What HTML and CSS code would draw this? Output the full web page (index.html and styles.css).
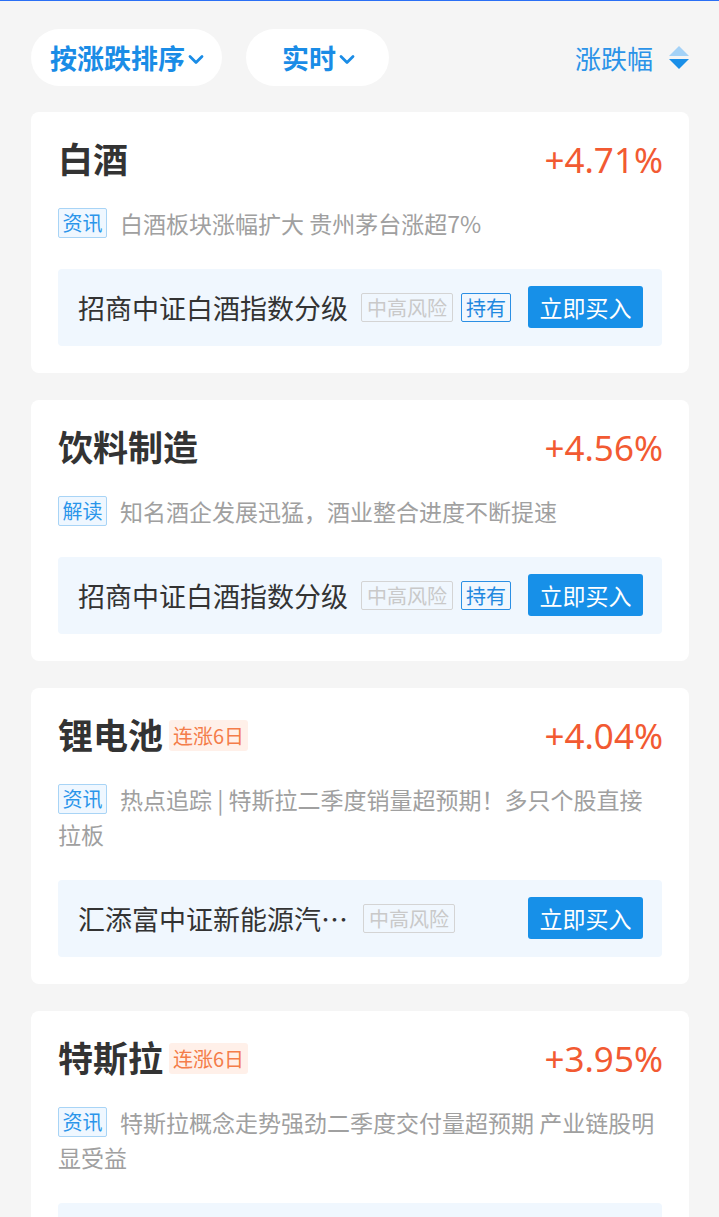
FILE: index.html
```html
<!DOCTYPE html>
<html lang="zh-CN">
<head>
<meta charset="utf-8">
<title>板块涨跌</title>
<link rel="stylesheet" href="styles.css">
</head>
<body>
<div class="page">
  <div class="toolbar">
    <button class="pill pill-sort">按涨跌排序<svg class="chev" width="16" height="11" viewBox="0 0 16 11"><path d="M2 2.5 L8 8.5 L14 2.5" fill="none" stroke="currentColor" stroke-width="2.8" stroke-linecap="round" stroke-linejoin="round"/></svg></button>
    <button class="pill pill-time">实时<svg class="chev" width="16" height="11" viewBox="0 0 16 11"><path d="M2 2.5 L8 8.5 L14 2.5" fill="none" stroke="currentColor" stroke-width="2.8" stroke-linecap="round" stroke-linejoin="round"/></svg></button>
    <div class="sort">涨跌幅<svg class="sort-icon" width="20" height="24" viewBox="0 0 20 24"><polygon points="10,0 20,10 0,10" fill="#a4d2f7"/><polygon points="0,13 20,13 10,23" fill="#1a8fe8"/></svg></div>
  </div>

  <div class="list">
    <div class="card">
      <div class="card-head">
        <div class="title-wrap"><span class="title">白酒</span></div>
        <span class="pct">+4.71%</span>
      </div>
      <p class="desc"><span class="tag">资讯</span>白酒板块涨幅扩大 贵州茅台涨超7%</p>
      <div class="fund">
        <span class="fund-name">招商中证白酒指数分级</span>
        <span class="risk">中高风险</span>
        <span class="hold">持有</span>
        <button class="buy">立即买入</button>
      </div>
    </div>

    <div class="card">
      <div class="card-head">
        <div class="title-wrap"><span class="title">饮料制造</span></div>
        <span class="pct">+4.56%</span>
      </div>
      <p class="desc"><span class="tag">解读</span>知名酒企发展迅猛，酒业整合进度不断提速</p>
      <div class="fund">
        <span class="fund-name">招商中证白酒指数分级</span>
        <span class="risk">中高风险</span>
        <span class="hold">持有</span>
        <button class="buy">立即买入</button>
      </div>
    </div>

    <div class="card">
      <div class="card-head">
        <div class="title-wrap"><span class="title">锂电池</span><span class="streak">连涨6日</span></div>
        <span class="pct">+4.04%</span>
      </div>
      <p class="desc"><span class="tag">资讯</span>热点追踪 | 特斯拉二季度销量超预期！多只个股直接拉板</p>
      <div class="fund">
        <span class="fund-name">汇添富中证新能源汽车指数</span>
        <span class="risk">中高风险</span>
        <button class="buy">立即买入</button>
      </div>
    </div>

    <div class="card">
      <div class="card-head">
        <div class="title-wrap"><span class="title">特斯拉</span><span class="streak">连涨6日</span></div>
        <span class="pct">+3.95%</span>
      </div>
      <p class="desc"><span class="tag">资讯</span>特斯拉概念走势强劲二季度交付量超预期 产业链股明显受益</p>
      <div class="fund">
        <span class="fund-name">汇添富中证新能源汽车指数</span>
        <span class="risk">中高风险</span>
        <button class="buy">立即买入</button>
      </div>
    </div>
  </div>
</div>
</body>
</html>
```

FILE: styles.css
```css
* { box-sizing: border-box; }

html, body {
  margin: 0;
  padding: 0;
}

body {
  background: #f5f5f5;
  font-family: "Noto Sans CJK SC", "Noto Sans", sans-serif;
  color: #333;
  border-top: 1px solid #2a6ff5;
  overflow: hidden;
}

.page {
  padding: 28px 30px 0 31px;
}

.toolbar {
  display: flex;
  align-items: center;
  height: 57px;
  margin-bottom: 26px;
}

.pill {
  display: flex;
  align-items: center;
  height: 57px;
  border: none;
  border-radius: 29px;
  background: #fff;
  color: #1a8ce6;
  font-family: "Noto Sans CJK SC", sans-serif;
  font-size: 27px;
  font-weight: 700;
  line-height: 57px;
  margin: 0;
}

.pill-sort {
  padding: 0 18px 0 19px;
}

.pill-time {
  margin-left: 24px;
  padding: 0 34px 0 36px;
}

.chev {
  margin-left: 3px;
  margin-top: 4px;
  flex-shrink: 0;
}

.sort {
  margin-left: auto;
  display: flex;
  align-items: center;
  color: #2b93e8;
  font-size: 26px;
  line-height: 57px;
}

.sort-icon {
  margin-left: 16px;
}

.list {
  display: flex;
  flex-direction: column;
  gap: 27px;
}

.card {
  background: #fff;
  border-radius: 8px;
  padding: 27px 27px 27px 27px;
}

.card-head {
  display: flex;
  align-items: center;
  justify-content: space-between;
  height: 40px;
}

.title-wrap {
  display: flex;
  align-items: center;
}

.title {
  font-size: 35px;
  font-weight: 700;
  line-height: 40px;
  color: #333;
  margin-top: -2px;
}

.streak {
  margin-left: 6px;
  height: 31px;
  padding: 0 4px;
  line-height: 31px;
  font-size: 20px;
  color: #f47d4a;
  background: #fff0e9;
  border-radius: 3px;
}

.pct {
  font-family: "Noto Sans", sans-serif;
  font-size: 35px;
  line-height: 40px;
  color: #f25a32;
  margin-top: 2px;
  margin-right: -1px;
}

.desc {
  margin: 27px 0 0;
  font-size: 23px;
  line-height: 35px;
  color: #a0a0a0;
}

.tag {
  display: inline-block;
  vertical-align: top;
  margin-top: 2px;
  height: 30px;
  padding: 0 3.5px;
  margin-right: 13px;
  border: 1px solid #a8d4f6;
  background: #eff7ff;
  border-radius: 2px;
  color: #2a95ea;
  font-size: 20px;
  line-height: 28px;
}

.fund {
  margin-top: 28px;
  height: 77px;
  display: flex;
  align-items: center;
  padding: 0 19px 0 20px;
  background: #f0f7fe;
  border-radius: 4px;
}

.fund-name {
  max-width: 272px;
  font-size: 27px;
  line-height: 40px;
  color: #333;
  white-space: nowrap;
  overflow: hidden;
  text-overflow: ellipsis;
  flex-shrink: 0;
}

.risk {
  margin-left: 13px;
  height: 29px;
  padding: 0 5px;
  border: 1px solid #d4d4d4;
  border-radius: 2px;
  color: #c9c9c9;
  font-size: 20px;
  line-height: 27px;
  flex-shrink: 0;
}

.hold {
  margin-left: 8px;
  height: 29px;
  padding: 0 4px;
  border: 1px solid #2b8fe4;
  border-radius: 2px;
  color: #1f88e0;
  font-size: 20px;
  line-height: 27px;
  flex-shrink: 0;
}

.buy {
  margin-left: auto;
  width: 115px;
  height: 42px;
  padding: 0;
  border: none;
  border-radius: 3px;
  background: #1790e8;
  color: #fff;
  font-family: "Noto Sans CJK SC", sans-serif;
  font-size: 23px;
  line-height: 42px;
  flex-shrink: 0;
  margin-top: -2px;
}
```
